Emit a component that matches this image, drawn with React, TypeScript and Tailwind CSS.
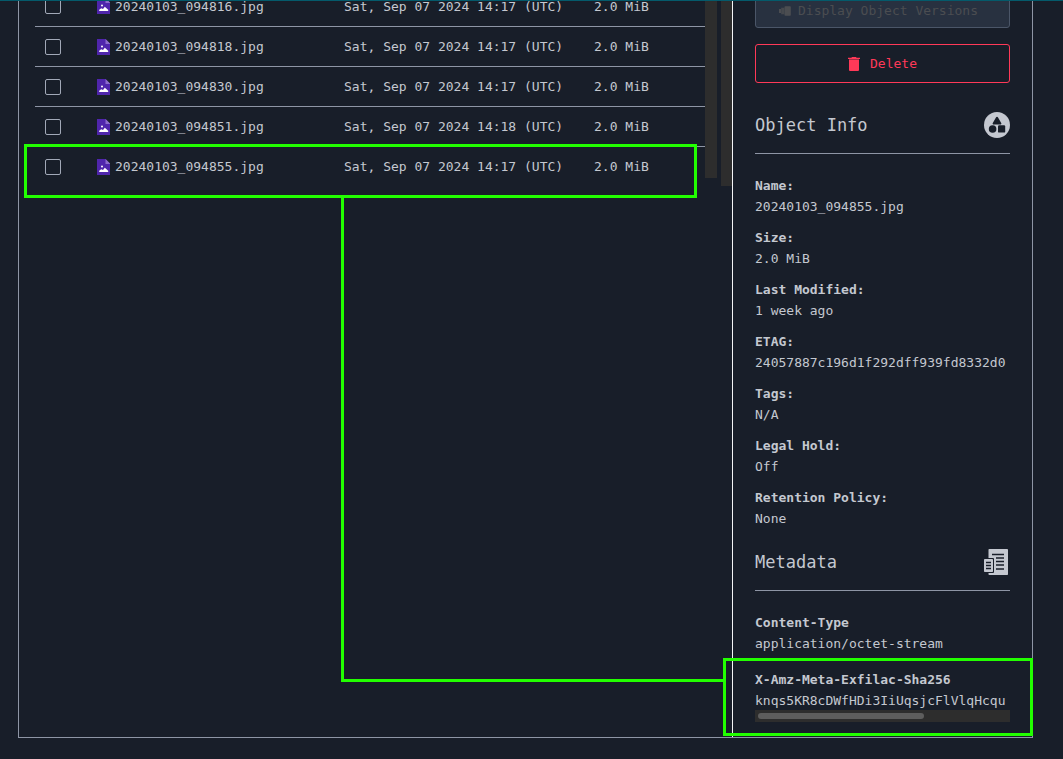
import type { ReactNode } from "react";

const files = [
  { name: "20240103_094816.jpg", modified: "Sat, Sep 07 2024 14:17 (UTC)", size: "2.0 MiB" },
  { name: "20240103_094818.jpg", modified: "Sat, Sep 07 2024 14:17 (UTC)", size: "2.0 MiB" },
  { name: "20240103_094830.jpg", modified: "Sat, Sep 07 2024 14:17 (UTC)", size: "2.0 MiB" },
  { name: "20240103_094851.jpg", modified: "Sat, Sep 07 2024 14:18 (UTC)", size: "2.0 MiB" },
  { name: "20240103_094855.jpg", modified: "Sat, Sep 07 2024 14:17 (UTC)", size: "2.0 MiB" },
];

const info = [
  { label: "Name:", value: "20240103_094855.jpg" },
  { label: "Size:", value: "2.0 MiB" },
  { label: "Last Modified:", value: "1 week ago" },
  { label: "ETAG:", value: "24057887c196d1f292dff939fd8332d0" },
  { label: "Tags:", value: "N/A" },
  { label: "Legal Hold:", value: "Off" },
  { label: "Retention Policy:", value: "None" },
];

const metadata = [
  { label: "Content-Type", value: "application/octet-stream" },
  { label: "X-Amz-Meta-Exfilac-Sha256", value: "knqs5KR8cDWfHDi3IiUqsjcFlVlqHcqu" },
];

function ImageFileIcon() {
  return (
    <svg className="h-4 w-[13px] shrink-0" viewBox="0 0 13 16" aria-hidden="true">
      <path d="M0 0h8.5l4.5 4.5V16H0z" fill="#4f25ac" />
      <path d="M8.5 0 13 4.5V5H8.5z" fill="#8c6ccb" />
      <circle cx="5" cy="7.4" r="1" fill="#fff" />
      <path d="M2.2 13v-1.2l2-1.6 1.8.8 1.8-2.2 3.4 2.9V13z" fill="#fff" />
    </svg>
  );
}

function VersionsIcon() {
  return (
    <svg className="h-[10px] w-3" viewBox="0 0 12 10" fill="currentColor" aria-hidden="true">
      <path d="M0 3h2v4H0z" />
      <path d="M2.2 1.7h3.2v6.6H2.2z" opacity=".85" />
      <rect x="5.5" y=".3" width="6.3" height="9.4" rx=".8" />
    </svg>
  );
}

function TrashIcon() {
  return (
    <svg className="h-[14px] w-3" viewBox="0 0 12 14" fill="currentColor" aria-hidden="true">
      <path d="M4 0h4l.6.8H12V2H0V.8h3.4z" />
      <path d="M1 2h10v1H1z" opacity=".6" />
      <path d="M1 3h10v10a1 1 0 0 1-1 1H2a1 1 0 0 1-1-1z" />
    </svg>
  );
}

function ObjectInfoIcon() {
  return (
    <svg className="h-[26px] w-[26px]" viewBox="0 0 26 26" aria-hidden="true">
      <circle cx="13" cy="13" r="13" fill="#c4c8d0" />
      <g fill="#181e29">
        <path d="M12.1 5.2a1 1 0 0 1 1.8 0l3.3 5.8a1 1 0 0 1-.9 1.6H9.7a1 1 0 0 1-.9-1.6z" />
        <circle cx="8.6" cy="17" r="3.8" />
        <rect x="14" y="13.3" width="7.2" height="7.3" rx="1.2" />
      </g>
    </svg>
  );
}

function MetadataIcon() {
  return (
    <svg className="mr-[2px] h-[26px] w-6" viewBox="0 0 24 26" aria-hidden="true">
      <rect x="4.5" width="19.5" height="26" rx=".8" fill="#c4c8d0" />
      <path d="M8 5.5h12M12 9h8M12 12.5h8M12 16h8M12 20h8" stroke="#181e29" strokeWidth="1.6" />
      <rect x="-1" y="9" width="11" height="15" rx="1" fill="#181e29" />
      <rect y="10" width="9" height="13" rx=".8" fill="#c4c8d0" />
      <path d="M2 13.5h5M2 16.5h5M2 19.5h5" stroke="#181e29" strokeWidth="1.4" />
    </svg>
  );
}

function SectionHeader({ title, icon }: { title: string; icon: ReactNode }) {
  return (
    <div className="flex h-[57px] items-center justify-between border-b border-[#8e95a5]">
      <h2 className="text-[17px] leading-6">{title}</h2>
      {icon}
    </div>
  );
}

function Field({ label, value }: { label: string; value: string }) {
  return (
    <div className="leading-[21px]">
      <dt className="font-bold">{label}</dt>
      <dd className="overflow-hidden whitespace-nowrap">{value}</dd>
    </div>
  );
}

export default function App() {
  return (
    <div className="min-h-screen overflow-hidden border-t border-[#045a6b] bg-[#181e29] pb-[21px] font-['DejaVu_Sans_Mono','Liberation_Mono',monospace] text-[13px] text-[#c4c8d0]">
      <main className="mr-[30px] ml-[18px] flex border-x border-b border-[#8e95a5]">
        <section className="relative flex min-w-0 flex-1 items-start pl-4">
          <table className="-mt-[15px] min-w-0 flex-1 table-fixed border-collapse">
            <colgroup>
              <col className="w-[62px]" />
              <col className="w-[247px]" />
              <col className="w-[250px]" />
              <col />
            </colgroup>
            <tbody>
              {files.map((file) => (
                <tr key={file.name} className="h-10 border-b border-[#8e95a5] last:border-b-0">
                  <td className="p-0 pt-px pl-[10px]">
                    <input
                      type="checkbox"
                      aria-label={file.name}
                      className="block h-4 w-4 appearance-none rounded-[2px] border border-[#a2a9b8] checked:bg-[#4f25ac]"
                    />
                  </td>
                  <td className="p-0 pt-px">
                    <div className="flex items-center gap-[5px]">
                      <ImageFileIcon />
                      <span>{file.name}</span>
                    </div>
                  </td>
                  <td className="p-0 pt-px whitespace-nowrap">{file.modified}</td>
                  <td className="p-0 pt-px whitespace-nowrap">{file.size}</td>
                </tr>
              ))}
            </tbody>
          </table>
          <div className="h-[177px] w-3 shrink-0 bg-[#2d2d2d]" />
          <div className="ml-1 h-[185px] w-[11px] shrink-0 bg-[#2d2d2d]" />

          <div className="pointer-events-none absolute top-[143px] right-[35px] left-[5px] h-[54px] border-[3px] border-[#22ff00]" />
          <div className="pointer-events-none absolute top-[197px] right-[9px] bottom-[55px] left-[322px] border-b-[3px] border-l-[3px] border-[#22ff00]" />
        </section>

        <aside className="relative w-[300px] shrink-0 border-l border-[#f4f5f7] px-[22px] pb-[15px]">
          <div className="-mt-[7px] flex flex-col gap-4">
            <button
              type="button"
              disabled
              className="flex h-[34px] items-center justify-center gap-[7px] rounded-[3px] border border-[#4b5668] bg-[#283140] pr-2 text-[#4b4d51]"
            >
              <VersionsIcon />
              Display Object Versions
            </button>
            <button
              type="button"
              className="flex h-[39px] items-center justify-center gap-[10px] rounded-[3px] border border-[#ff3958] text-[#ff3958]"
            >
              <TrashIcon />
              Delete
            </button>
          </div>

          <div className="mt-[14px]">
            <SectionHeader title="Object Info" icon={<ObjectInfoIcon />} />
            <dl className="mt-[21px] flex flex-col gap-[10px]">
              {info.map((item) => (
                <Field key={item.label} label={item.label} value={item.value} />
              ))}
            </dl>
          </div>

          <div className="mt-[5px]">
            <SectionHeader title="Metadata" icon={<MetadataIcon />} />
            <dl className="mt-[21px] flex flex-col gap-[15px]">
              {metadata.map((item) => (
                <Field key={item.label} label={item.label} value={item.value} />
              ))}
            </dl>
            <div className="-mt-px flex h-3 items-center bg-[#2d2d2d] px-[3px]">
              <div className="h-[6px] w-2/3 rounded-full bg-[#5d5d5d]" />
            </div>
          </div>

          <div className="pointer-events-none absolute -right-px bottom-px -left-[10px] h-[78px] border-[3px] border-[#22ff00]" />
        </aside>
      </main>
    </div>
  );
}
